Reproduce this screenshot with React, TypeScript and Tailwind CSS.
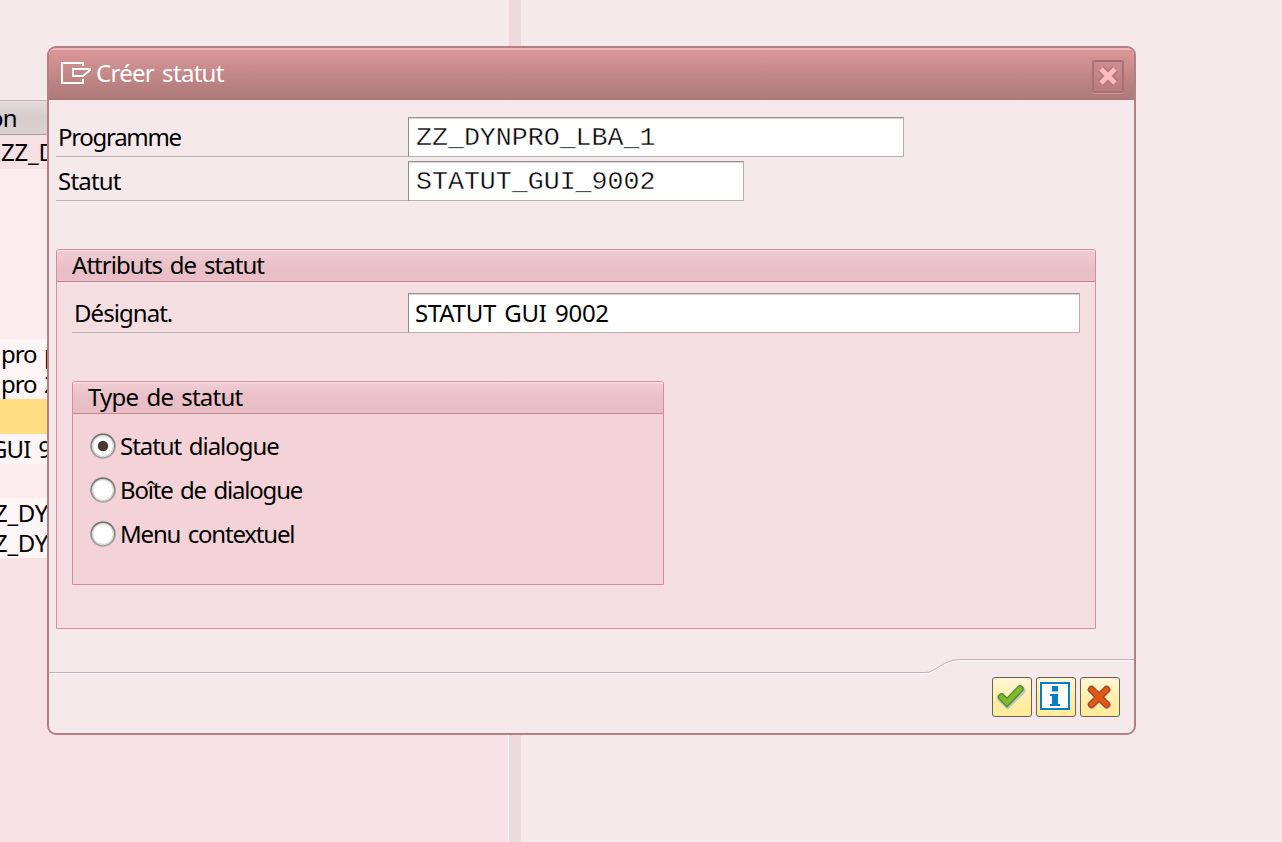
import type { ReactNode } from "react";

const uiFont = "font-['Noto_Sans',sans-serif] text-[24px] leading-[30px] whitespace-pre text-black [word-spacing:2.5px]";
const monoFont = "font-['Liberation_Mono',monospace] text-[26.6px] pt-[4px] [-webkit-text-stroke:0.4px_white]";

function Backdrop() {
  return (
    <div className="flex h-full w-full">
      <div className="flex w-[509px] shrink-0 flex-col overflow-hidden">
        <div className="h-[100px] shrink-0 bg-[#f5e9eb]" />
        <div className="flex h-[35px] shrink-0 items-center border-t border-b border-t-[#c9b4b7] border-b-[#a99fa0] bg-linear-to-b from-[#e6dcdd] via-[#d8cccd] to-[#dccfd0]">
          <span className={`${uiFont} -ml-[11px] tracking-[-0.8px]`}>on</span>
        </div>
        <div className="flex h-[34px] w-[47px] shrink-0 items-center overflow-hidden bg-[#f7e1e4]">
          <span className={`${uiFont} ml-px tracking-[-0.2px]`}>ZZ_D</span>
        </div>
        <div className="h-[170px] shrink-0 bg-[#fceced]" />
        <div className="flex h-[60px] w-[47px] shrink-0 flex-col overflow-hidden bg-[#fef5f6]">
          <span className={`${uiFont} ml-px tracking-[-1.1px]`}>pro p</span>
          <span className={`${uiFont} ml-px tracking-[-1.1px]`}>pro 2</span>
        </div>
        <div className="h-[35px] shrink-0 bg-[#fddc82]" />
        <div className="h-[30px] w-[47px] shrink-0 overflow-hidden bg-[#fef5f6]">
          <span className={`${uiFont} -ml-[10px] block tracking-[-0.9px]`}>GUI 9</span>
        </div>
        <div className="h-[34px] shrink-0 bg-[#fceced]" />
        <div className="flex h-[60px] w-[47px] shrink-0 flex-col overflow-hidden bg-[#fef5f6]">
          <span className={`${uiFont} -ml-[6px] tracking-[-0.3px]`}>Z_DY</span>
          <span className={`${uiFont} -ml-[6px] tracking-[-0.3px]`}>Z_DY</span>
        </div>
        <div className="grow border-r border-white bg-[#f7e1e4]" />
      </div>
      <div className="w-3 shrink-0 bg-[#ecdadd]" />
      <div className="grow bg-[#f5e9eb]" />
    </div>
  );
}

function Field({ value, className }: { value: string; className: string }) {
  return (
    <div
      className={`flex h-10 shrink-0 items-center whitespace-pre border border-t-[#958d8e] border-r-[#b7afb0] border-b-[#b7afb0] border-l-[#958d8e] bg-white text-black shadow-[inset_0_1px_1px_#ddd9d9] ${className}`}
    >
      {value}
    </div>
  );
}

function Group({ title, className, children }: { title: ReactNode; className: string; children: ReactNode }) {
  return (
    <section className={`flex flex-col rounded-t-[3px] border border-[#d08f9b] ${className}`}>
      <header className="flex h-8 shrink-0 items-center rounded-t-[2px] border-b border-[#c48591] bg-linear-to-b from-[#f0cfd5] via-[#e9c0c7] to-[#e9bec6] pb-[2px] shadow-[inset_0_1px_0_#f5dfe3]">
        {title}
      </header>
      {children}
    </section>
  );
}

function Radio({ label, checked, spacing }: { label: string; checked?: boolean; spacing: string }) {
  return (
    <div className="flex h-11 items-center">
      <svg width="26" height="26" viewBox="0 0 26 26" className="shrink-0">
        <defs>
          <linearGradient id="ring" x1="0" y1="0" x2="0" y2="1">
            <stop offset="0" stopColor="#777" />
            <stop offset="1" stopColor="#aaa4a4" />
          </linearGradient>
        </defs>
        <circle cx="13" cy="13" r="11.8" fill="#fff" stroke="url(#ring)" strokeWidth="2" />
        <circle cx="13" cy="13" r="10.4" fill="none" stroke="#cfcccc" />
        {checked && <circle cx="13" cy="13" r="5.2" fill="#4b3734" />}
      </svg>
      <span className={`${uiFont} ml-1 ${spacing}`}>{label}</span>
    </div>
  );
}

function ToolButton({ children }: { children: ReactNode }) {
  return (
    <button className="flex size-10 items-center justify-center rounded-[3px] border border-[#696253] bg-linear-to-b from-[#fff8d9] via-[#fdeeaa] to-[#ffeb99] shadow-[inset_0_1px_0_#fff6cf]">
      {children}
    </button>
  );
}

function Dialog() {
  return (
    <div className="absolute top-[46px] left-[47px] flex h-[689px] w-[1089px] flex-col overflow-hidden rounded-[9px] border-2 border-[#b08082] bg-[#f5e9eb]">
      <header className="flex h-[52px] shrink-0 items-center border-t-2 border-b border-t-[#eeb5b6] border-b-[#aa7678] bg-linear-to-b from-[#dc9798] to-[#ac7979] pr-[10px] pl-3">
        <svg width="31" height="24" viewBox="0 0 31 24" fill="none" stroke="#fff" strokeWidth="2" className="-mt-[4px] shrink-0">
          <path d="M22 5V2H1V22H22V18" />
          <path d="M30 8H12V15H22L29.5 8.5" />
        </svg>
        <h1 className="-mt-[4px] ml-[4px] grow font-['Noto_Sans',sans-serif] text-[24px] leading-[30px] font-normal tracking-[-0.7px] text-white [word-spacing:2.5px]">
          Créer statut
        </h1>
        <button className="mt-[3px] flex h-[33px] w-8 items-center justify-center rounded-[3px] border-2 border-[#aa7173] bg-linear-to-b from-[#ce8d8f] to-[#b87b7e] shadow-[0_1px_0_#d39a9c]">
          <svg width="22" height="22" viewBox="0 0 22 22" fill="none">
            <path d="M4 4L18 18M18 4L4 18" stroke="#b07477" strokeWidth="8" />
            <path d="M4 4L18 18M18 4L4 18" stroke="#ffbcbc" strokeWidth="4.8" />
          </svg>
        </button>
      </header>

      <div className="flex shrink-0 flex-col gap-1 pt-[17px] pl-[7px]">
        <div className="flex h-10">
          <div className="flex w-[352px] items-center border-b border-[#bbb1b3] pl-[2px]">
            <span className={`${uiFont} tracking-[-1.3px]`}>Programme</span>
          </div>
          <Field value="ZZ_DYNPRO_LBA_1" className={`w-[496px] pl-[7px] ${monoFont}`} />
        </div>
        <div className="flex h-10">
          <div className="flex w-[352px] items-center border-b border-[#bbb1b3] pl-[2px]">
            <span className={`${uiFont} tracking-[-0.8px]`}>Statut</span>
          </div>
          <Field value="STATUT_GUI_9002" className={`w-[336px] pl-[7px] ${monoFont}`} />
        </div>
      </div>

      <Group
        className="mt-12 ml-[7px] h-[380px] w-[1040px] shrink-0 bg-[#f4dee1]"
        title={<span className={`${uiFont} ml-[15px] tracking-[-0.95px]`}>Attributs de statut</span>}
      >
        <div className="mt-[11px] ml-[15px] flex h-10 shrink-0">
          <div className="flex w-[336px] items-center border-b border-[#bbb1b3] pl-[2px]">
            <span className={`${uiFont} tracking-[-0.95px]`}>Désignat.</span>
          </div>
          <Field
            value="STATUT GUI 9002"
            className="w-[672px] pl-[6px] font-['Noto_Sans',sans-serif] text-[24px] tracking-[-0.3px] [word-spacing:2.5px]"
          />
        </div>
        <Group
          className="mt-12 ml-[15px] h-[204px] w-[592px] shrink-0 bg-[#f3d3d8]"
          title={<span className={`${uiFont} ml-[15px] tracking-[-0.75px]`}>Type de statut</span>}
        >
          <div className="mt-[10px] ml-[17px] flex flex-col">
            <Radio label="Statut dialogue" spacing="tracking-[-1.05px]" checked />
            <Radio label="Boîte de dialogue" spacing="tracking-[-1.2px]" />
            <Radio label="Menu contextuel" spacing="tracking-[-1.2px]" />
          </div>
        </Group>
      </Group>

      <svg width="1085" height="16" viewBox="0 0 1085 16" fill="none" className="mt-[29px] shrink-0">
        <path d="M0 15.5H877C886 15.5 895 2.5 911 2.5H1085" stroke="#fff" />
        <path d="M0 14.5H877C886 14.5 895 1.5 911 1.5H1085" stroke="#cfaab2" />
      </svg>
      <div className="mt-[3px] flex shrink-0 justify-end gap-1 pr-[14px]">
        <ToolButton>
          <svg width="30" height="26" viewBox="0 0 30 26" fill="none" strokeLinecap="round" className="-ml-[2px]">
            <path d="M5.5 14L11.5 19.5L25 6.5" stroke="#c3c6bd" strokeWidth="9" />
            <path d="M5.5 13L11 18.5L24 5" stroke="#4e8535" strokeWidth="7.4" />
            <path d="M5.5 13L11 18.5L24 5" stroke="#80bb28" strokeWidth="4.8" />
          </svg>
        </ToolButton>
        <ToolButton>
          <svg width="30" height="28" viewBox="0 0 30 28" className="-mt-[2px] -ml-[2px] shrink-0">
            <rect x="1" y="1" width="28" height="26" fill="#fff" stroke="#087fc4" strokeWidth="2" />
            <path d="M12 4H18V9.5H12ZM10 12H18V22H20V24H10V22H12V14H10Z" fill="#087fc4" />
          </svg>
        </ToolButton>
        <ToolButton>
          <svg width="28" height="28" viewBox="0 0 28 28" fill="none" strokeLinecap="round" className="-ml-[2px]">
            <path d="M7 7L22 22M22 7L7 22" stroke="#d0c3a4" strokeWidth="8" />
            <path d="M6.5 6.5L21.5 21.5M21.5 6.5L6.5 21.5" stroke="#b43e20" strokeWidth="7.4" />
            <path d="M6.5 6.5L21.5 21.5M21.5 6.5L6.5 21.5" stroke="#dc5a18" strokeWidth="4.6" />
          </svg>
        </ToolButton>
      </div>
    </div>
  );
}

export default function App() {
  return (
    <main className="relative h-[842px] w-[1282px] overflow-hidden">
      <Backdrop />
      <Dialog />
    </main>
  );
}
